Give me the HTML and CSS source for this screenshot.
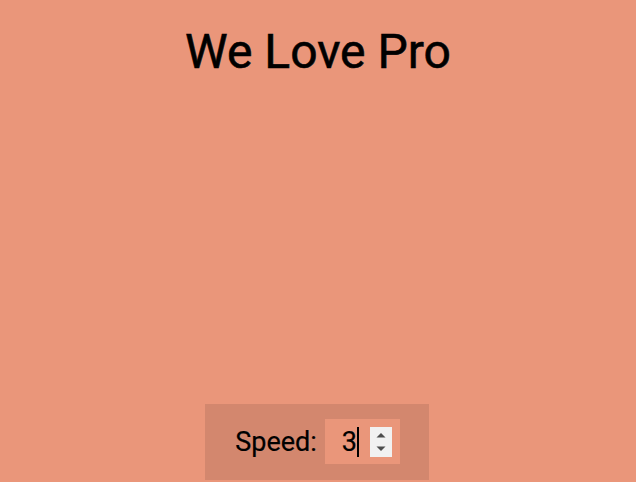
FILE: index.html
```html
<!DOCTYPE html>
<html lang="en">
<head>
<meta charset="utf-8">
<title>We Love Pro</title>
<link rel="stylesheet" href="styles.css">
</head>
<body>
<main class="page">
  <h1 class="title">We Love Pro</h1>
  <div class="controls">
    <span class="speed-label" id="speed-label">Speed:</span>
    <div class="speed-input" role="spinbutton" aria-labelledby="speed-label" aria-valuenow="3" tabindex="0">
      <span class="speed-value">3</span><span class="caret"></span>
      <span class="spinner">
        <svg class="spin-arrows" width="22" height="30" viewBox="0 0 22 30">
          <path d="M6.5 10.5 L11 6 L15.5 10.5 Z" fill="#4d4d4d"/>
          <path d="M6.5 19.5 L11 24 L15.5 19.5 Z" fill="#4d4d4d"/>
        </svg>
      </span>
    </div>
  </div>
</main>
</body>
</html>
```
FILE: styles.css
```css
html, body {
  margin: 0;
  padding: 0;
  height: 100%;
}
body {
  background: #ea967a;
  font-family: Roboto, "Liberation Sans", sans-serif;
  color: #000;
}
.page {
  height: 100vh;
  display: flex;
  flex-direction: column;
  align-items: center;
  justify-content: space-between;
  box-sizing: border-box;
  padding-bottom: 2px;
}
.title {
  margin: 24px 0 0;
  font-size: 48px;
  font-weight: 400;
  line-height: 56px;
  -webkit-text-stroke: 0.6px #000;
}
.controls {
  display: flex;
  align-items: center;
  gap: 8px;
  padding: 15px 29px 16px 30px;
  margin-right: 2px;
  background: #d3876e;
}
.speed-label {
  font-size: 27px;
  -webkit-text-stroke: 0.2px #000;
}
.speed-input {
  width: 75px;
  height: 45px;
  box-sizing: border-box;
  display: flex;
  align-items: center;
  padding: 0 8px 0 17px;
  background: #ea967a;
  font-size: 27px;
  outline: none;
}
.speed-value {
  line-height: 30px;
  -webkit-text-stroke: 0.2px #000;
}
.caret {
  width: 2px;
  height: 30px;
  background: #000;
}
.spinner {
  margin-left: auto;
  width: 22px;
  height: 30px;
  background: #f1f1f1;
  display: flex;
}
.spin-arrows {
  display: block;
}
```
